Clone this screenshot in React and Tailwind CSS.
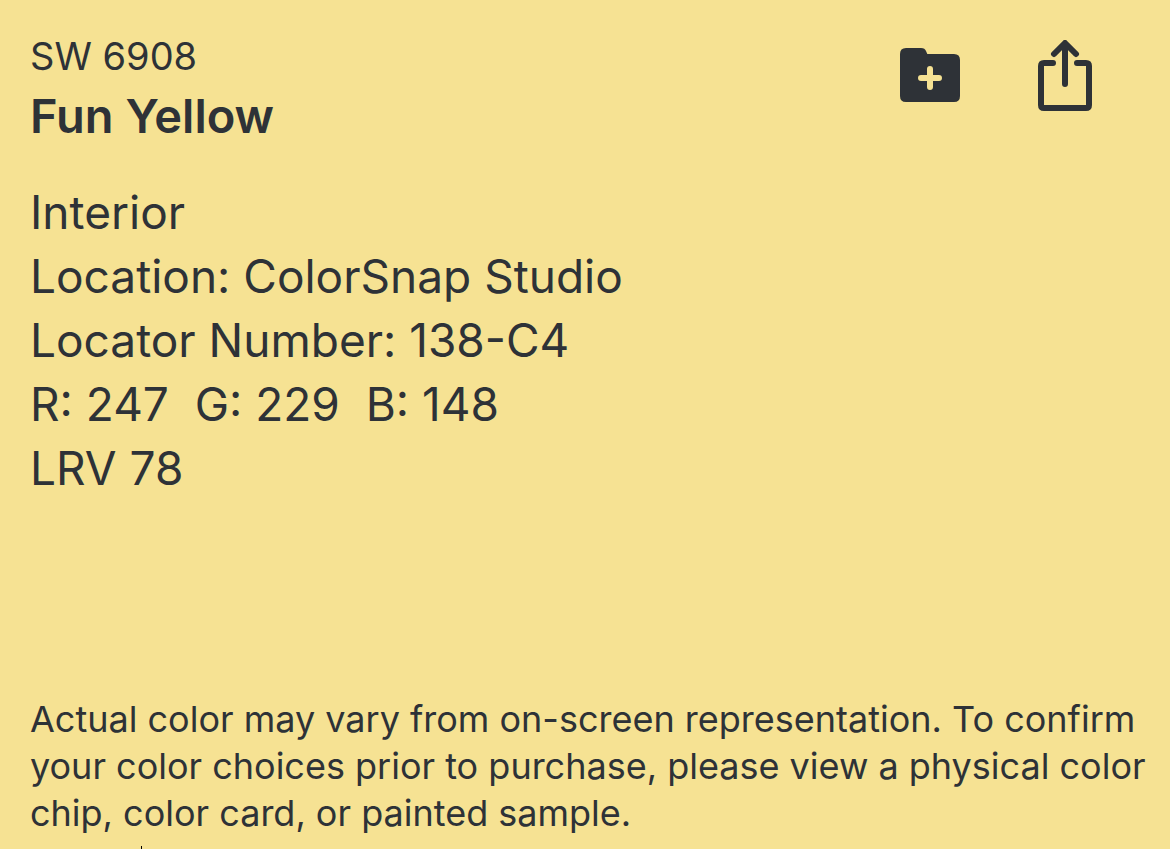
import React from 'react';

const details = [
    'Interior',
    'Location: ColorSnap Studio',
    'Locator Number: 138-C4',
    'R: 247  G: 229  B: 148',
    'LRV 78',
];

function FolderPlusIcon() {
    return (
        <svg width="60" height="54" viewBox="0 0 60 54" aria-hidden="true">
            <path fill="currentColor" d="M6 0h15c3 0 4 1 5 3l1.300 3H54q6 0 6 6v36q0 6-6 6H6q-6 0-6-6V6q0-6 6-6z" />
            <path d="M30 21v18M21 30h18" stroke="#f6e293" strokeWidth="6" strokeLinecap="round" />
        </svg>
    );
}

function ShareIcon() {
    return (
        <svg width="54" height="72" viewBox="0 0 54 72" fill="none" stroke="currentColor" strokeWidth="6" strokeLinecap="round" strokeLinejoin="round" aria-hidden="true">
            <path d="M15 23H6q-3 0-3 3v39q0 3 3 3h42q3 0 3-3V26q0-3-3-3h-9" />
            <path d="M27 44V4M16 14L27 3l11 11" />
        </svg>
    );
}

export default function App() {
    return (
        <main className="relative min-h-screen bg-[#f6e293] text-[#2e3237] font-['Inter',sans-serif] pl-[30px] pr-5 pt-8 pb-3 flex flex-col overflow-hidden">
            <header className="flex justify-between items-start">
                <div>
                    <p className="text-[38px] leading-[48px]">SW 6908</p>
                    <h1 className="text-[47px] leading-[64px] mt-1 font-semibold">Fun Yellow</h1>
                </div>
                <div className="flex items-start gap-[78px] pr-[58px] pt-2">
                    <button type="button" aria-label="Add to folder" className="pt-2">
                        <FolderPlusIcon />
                    </button>
                    <button type="button" aria-label="Share">
                        <ShareIcon />
                    </button>
                </div>
            </header>

            <ul className="mt-8 text-[46px] leading-[64px] whitespace-pre-wrap">
                {details.map((line) => (
                    <li key={line}>{line}</li>
                ))}
            </ul>

            <p className="mt-auto text-[36px] leading-[47px]">
                Actual color may vary from on-screen representation. To confirm your color choices prior to purchase, please view a physical color chip, color card, or painted sample.
            </p>

            {/* hairline mark on the bottom edge */}
            <span className="absolute bottom-0 left-[141px] w-px h-[3px] bg-black" aria-hidden="true"></span>
        </main>
    );
}
